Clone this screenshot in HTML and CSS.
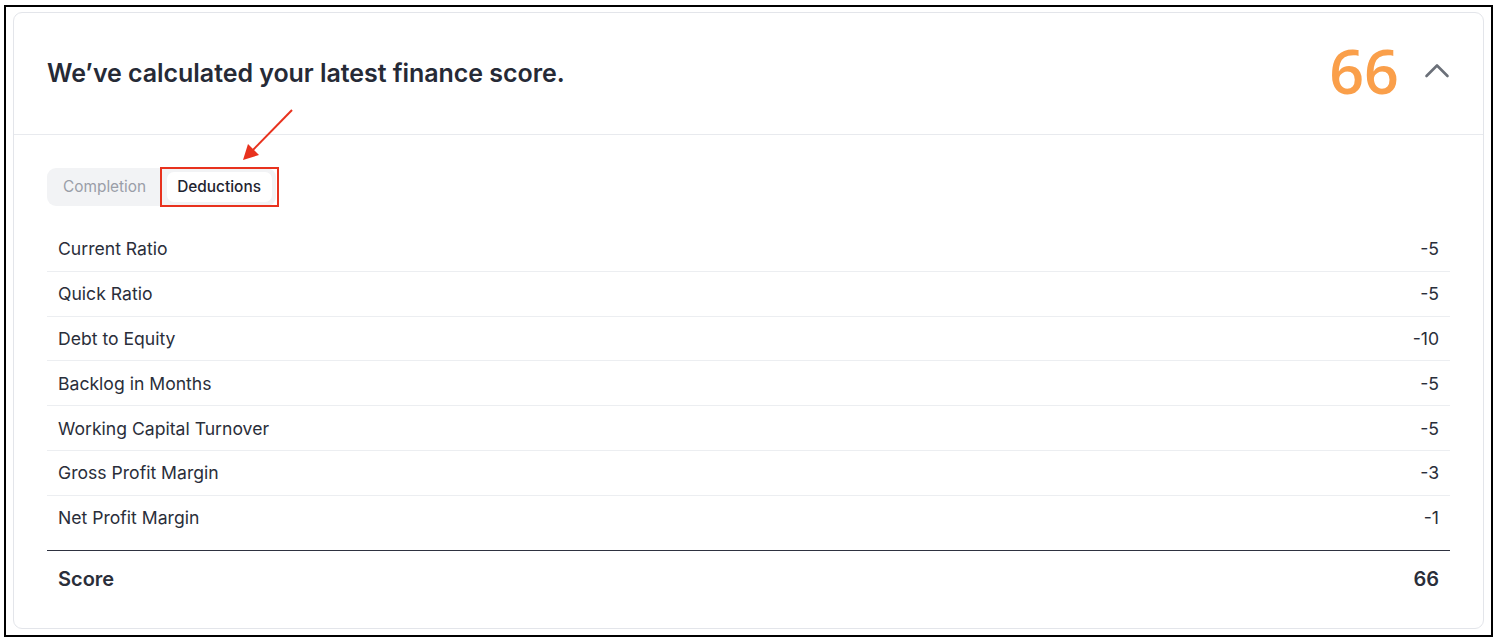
FILE: index.html
```html
<!DOCTYPE html>
<html lang="en">
<head>
<meta charset="utf-8">
<title>Finance score</title>
<link rel="stylesheet" href="styles.css">
</head>
<body>
<div class="frame">
  <section class="card">
    <header class="card-header">
      <h1 class="title">We’ve calculated your latest finance score.</h1>
      <div class="header-right">
        <span class="big-score">66</span>
        <svg class="chevron" width="26" height="15" viewBox="0 0 26 15" aria-hidden="true">
          <path d="M2.5 13 L13 2.5 L23.5 13" fill="none" stroke="#6b7079" stroke-width="2.6" stroke-linecap="round" stroke-linejoin="round"/>
        </svg>
      </div>
    </header>
    <div class="card-body">
      <div class="tabs-wrap">
        <div class="tabs">
          <span class="tab">Completion</span>
          <span class="tab tab-active">Deductions</span>
        </div>
        <span class="highlight"></span>
        <svg class="arrow" width="60" height="60" viewBox="0 0 60 60" aria-hidden="true">
          <line x1="53" y1="2" x2="12" y2="44" stroke="#e8321e" stroke-width="2"/>
          <path d="M4 52 L9 36 L20 47 Z" fill="#e8321e"/>
        </svg>
      </div>
      <div class="rows">
        <div class="row"><span>Current Ratio</span><span>-5</span></div>
        <div class="row"><span>Quick Ratio</span><span>-5</span></div>
        <div class="row"><span>Debt to Equity</span><span>-10</span></div>
        <div class="row"><span>Backlog in Months</span><span>-5</span></div>
        <div class="row"><span>Working Capital Turnover</span><span>-5</span></div>
        <div class="row"><span>Gross Profit Margin</span><span>-3</span></div>
        <div class="row row-last"><span>Net Profit Margin</span><span>-1</span></div>
        <div class="row total"><span>Score</span><span>66</span></div>
      </div>
    </div>
  </section>
</div>
</body>
</html>
```

FILE: styles.css
```css
* { box-sizing: border-box; }

html, body {
  margin: 0;
  background: #ffffff;
}

body {
  font-family: Inter, "Noto Sans", "Liberation Sans", sans-serif;
  color: #1f2430;
}

.frame {
  margin: 5px 0 0 4px;
  width: 1489px;
  height: 632px;
  border: 2px solid #000000;
  padding: 5px 7px 6px 7px;
}

.card {
  height: 100%;
  border: 1px solid #e3e5ea;
  border-radius: 9px;
  display: flex;
  flex-direction: column;
}

.card-header {
  height: 122px;
  border-bottom: 1px solid #e8eaee;
  display: flex;
  align-items: center;
  justify-content: space-between;
  padding: 0 33px 0 33px;
}

.title {
  margin: 0;
  font-size: 25px;
  font-weight: 600;
  letter-spacing: -0.05px;
  color: #262a36;
  padding-bottom: 2px;
}

.header-right {
  display: flex;
  align-items: center;
  gap: 25px;
}

.big-score {
  font-family: "Open Sans", sans-serif;
  font-size: 61px;
  font-weight: 600;
  color: #fa9f4a;
  line-height: 1;
  padding-bottom: 6px;
}

.chevron {
  display: block;
  margin-bottom: 6px;
}

.card-body {
  padding: 33px 33px 0 33px;
}

.tabs-wrap {
  position: relative;
  display: flex;
}

.tabs {
  display: flex;
  align-items: center;
  height: 38px;
  padding: 0 4px 0 0;
  background: #f2f3f5;
  border-radius: 9px;
}

.tab {
  font-size: 15.4px;
  color: #9a9ea8;
  padding: 0 16px;
  line-height: 30px;
}

.tab-active {
  background: #ffffff;
  color: #1f2430;
  font-weight: 500;
  border-radius: 7px;
  padding: 0 11px 0 10px;
  margin-left: 5px;
}

.highlight {
  position: absolute;
  left: 113px;
  top: -1px;
  width: 119px;
  height: 40px;
  border: 2px solid #e8321e;
}

.arrow {
  position: absolute;
  left: 192px;
  top: -60px;
}

.rows {
  margin-top: 21px;
  display: flex;
  flex-direction: column;
}

.row {
  display: flex;
  justify-content: space-between;
  align-items: center;
  height: 44.8px;
  padding: 0 11px;
  border-bottom: 1px solid #eceef1;
  font-size: 17.6px;
  color: #2a2e3a;
}

.row-last {
  height: 55px;
  padding-bottom: 10px;
  border-bottom: 1px solid #2e3240;
}

.total {
  height: 56px;
  border-bottom: none;
  font-size: 20px;
  font-weight: 600;
}
```
